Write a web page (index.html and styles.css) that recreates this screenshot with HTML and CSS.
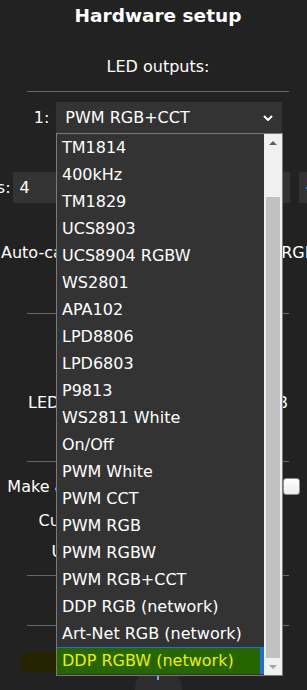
FILE: index.html
```html
<!DOCTYPE html>
<html lang="en">
<head>
  <meta charset="UTF-8">
  <meta name="viewport" content="width=device-width, initial-scale=1.0">
  <title>LED Settings</title>
  <link rel="stylesheet" href="styles.css">
</head>
<body>
  <div class="page">
    <h2 class="title">Hardware setup</h2>
    <p class="section-title">LED outputs:</p>
    <hr>

    <div class="bus-row">
      <span class="bus-num">1:</span>
      <div class="select">
        <span>PWM RGB+CCT</span>
        <svg class="chevron" width="10" height="6" viewBox="0 0 10 6"><polyline points="1,1 5,5 9,1" fill="none" stroke="#fff" stroke-width="2"/></svg>
      </div>
    </div>

    <div class="count-row">
      <span class="label">LEDs:</span>
      <span class="field field-count">4</span>
      <span class="field field-wide"></span>
      <span class="field field-end"><span class="caret"></span></span>
    </div>

    <div class="auto-row">Auto-calculate white channel from RGB:</div>
    <hr class="gap-50">

    <div class="mem-row">LED memory usage: 48 / 6000 B</div>
    <hr class="gap-48">

    <div class="check-row first">Make a segment for each output:<span class="checkbox"></span></div>
    <div class="check-row">Custom bus start indices:<span class="checkbox"></span></div>
    <div class="check-row tight">Use global LED buffer:<span class="checkbox"></span></div>
    <hr class="gap-14">
    <hr class="gap-49">

    <div class="round-btn"><span class="dot"></span></div>
  </div>

  <!-- marker smudge left of the open list -->
  <div class="marker"></div>

  <!-- open native dropdown of the type select -->
  <div class="dropdown">
    <ul class="options">
      <li>TM1814</li>
      <li>400kHz</li>
      <li>TM1829</li>
      <li>UCS8903</li>
      <li>UCS8904 RGBW</li>
      <li>WS2801</li>
      <li>APA102</li>
      <li>LPD8806</li>
      <li>LPD6803</li>
      <li>P9813</li>
      <li>WS2811 White</li>
      <li>On/Off</li>
      <li>PWM White</li>
      <li>PWM CCT</li>
      <li>PWM RGB</li>
      <li>PWM RGBW</li>
      <li>PWM RGB+CCT</li>
      <li>DDP RGB (network)</li>
      <li>Art-Net RGB (network)</li>
      <li class="active">DDP RGBW (network)</li>
    </ul>
    <div class="scrollbar">
      <div class="sb-btn">
        <svg width="8" height="4" viewBox="0 0 8 4"><polygon points="0,4 4,0 8,4" fill="#606060"/></svg>
      </div>
      <div class="sb-track"><div class="sb-thumb"></div></div>
      <div class="sb-btn">
        <svg width="8" height="4" viewBox="0 0 8 4"><polygon points="0,0 8,0 4,4" fill="#a3a3a3"/></svg>
      </div>
    </div>
  </div>
</body>
</html>
```

FILE: styles.css
```css
html, body {
  overflow: hidden;
}
body {
  margin: 0;
  background: #222;
  color: #fff;
  font-family: 'DejaVu Sans', Verdana, sans-serif;
  font-size: 16px;
  height: 690px;
}
.page {
  width: 316px;
  text-align: center;
}
.title {
  margin: 0;
  padding-top: 5px;
  font-size: 18.5px;
  line-height: 22px;
}
.section-title {
  margin: 30px 0 0;
  line-height: 20px;
}
hr {
  border: 0;
  border-top: 1px solid #666;
  height: 0;
  margin: 14px 27px 0;
}
hr.gap-50 { margin-top: 50px; }
hr.gap-48 { margin-top: 48px; }
hr.gap-14 { margin-top: 14px; }
hr.gap-49 { margin-top: 49px; }

.bus-row {
  display: flex;
  justify-content: center;
  align-items: center;
  margin-top: 10px;
  height: 31px;
}
.bus-num {
  margin-right: 7px;
}
.select {
  width: 226px;
  height: 31px;
  background: #333;
  display: flex;
  align-items: center;
  padding-left: 9px;
  box-sizing: border-box;
}
.chevron {
  margin-left: auto;
  margin-right: 9px;
}

.count-row {
  display: flex;
  justify-content: center;
  align-items: center;
  white-space: nowrap;
  margin-top: 39px;
  height: 31px;
}
.count-row > * {
  flex-shrink: 0;
}
.count-row .label {
  margin-right: 2px;
}
.field {
  display: flex;
  align-items: center;
  height: 31px;
  background: #333;
  text-align: left;
  box-sizing: border-box;
  padding-left: 7px;
}
.field-count { width: 138px; margin-right: 6px; }
.field-wide { width: 133px; margin-right: 9px; }
.field-end { width: 52px; }
.caret {
  width: 4px;
  height: 2px;
  background: #3b82f6;
}

.auto-row {
  margin-top: 40px;
  line-height: 20px;
  white-space: nowrap;
  text-align: left;
  padding-left: 1px;
}
.mem-row {
  margin-top: 79px;
  line-height: 20px;
  white-space: nowrap;
}
.check-row {
  display: flex;
  justify-content: center;
  align-items: center;
  white-space: nowrap;
  height: 20px;
  margin-top: 14px;
}
.check-row.tight {
  margin-top: 11px;
}
.checkbox {
  flex-shrink: 0;
  width: 17px;
  height: 17px;
  box-sizing: border-box;
  margin: 0 9px;
  border: 1px solid #8a8a8a;
  border-radius: 3px;
  background: linear-gradient(#fff, #ececec);
}
.round-btn {
  width: 47px;
  height: 47px;
  border-radius: 50%;
  background: #2d2d2d;
  margin: 39px auto 0;
  display: flex;
  justify-content: center;
  padding-top: 11px;
  box-sizing: border-box;
}
.round-btn .dot {
  width: 2px;
  height: 4px;
  background: #7aa7e8;
}

.marker {
  position: absolute;
  left: 20px;
  top: 652px;
  width: 40px;
  height: 20px;
  background: #262400;
  border-radius: 6px 2px 2px 8px;
}

.dropdown {
  position: absolute;
  left: 56px;
  top: 133px;
  width: 227px;
  height: 543px;
  box-sizing: border-box;
  border: 1px solid #7a7a7a;
  background: #333;
  display: flex;
}
.options {
  list-style: none;
  margin: 0;
  padding: 0;
  width: 207px;
  overflow: hidden;
}
.options li {
  height: 27px;
  line-height: 27px;
  padding-left: 5px;
  white-space: nowrap;
}
.options li.active {
  background: #256600;
  color: #eef000;
  box-shadow: inset -4px 1px 0 #1e6fd7;
}
.scrollbar {
  width: 18px;
  background: #f0f0f0;
  display: flex;
  flex-direction: column;
}
.sb-btn {
  height: 17px;
  display: flex;
  align-items: center;
  justify-content: center;
}
.sb-track {
  flex: 1;
}
.sb-thumb {
  margin: 46px 2px 0;
  height: 461px;
  background: #c1c1c1;
}
```
